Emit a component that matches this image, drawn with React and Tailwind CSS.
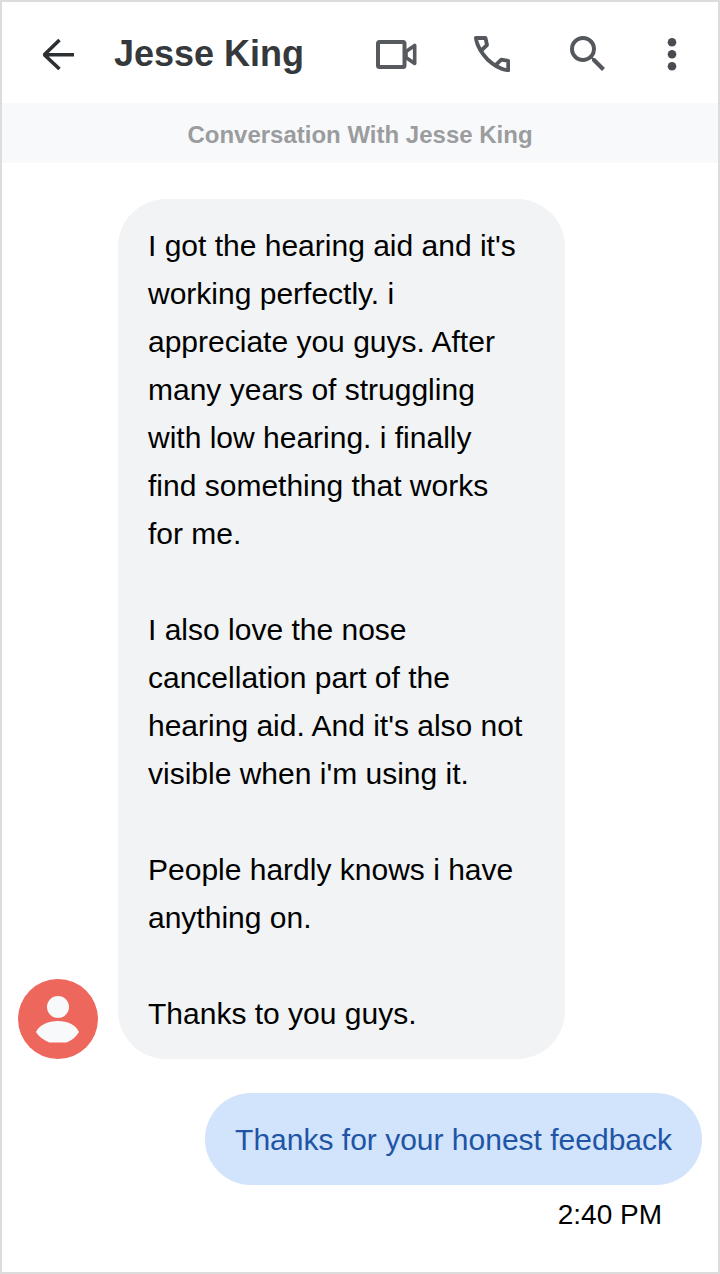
import React, { Component } from "react";
import { MdSearch } from "react-icons/md";

const BackIcon = () => (
  <svg viewBox="0 0 32 32" className="size-8" fill="none" stroke="#2c3033" strokeWidth="3.6" strokeLinejoin="bevel">
    <path d="M32 16.700H2M17.500 2 2.300 16.700l15.200 14.300" />
  </svg>
);

const VideoIcon = () => (
  <svg viewBox="0 0 42 30" className="h-[30px] w-[42px]" fill="none" stroke="#565a5f" strokeLinejoin="round">
    <rect x="3" y="2.900" width="26.500" height="25" rx="1.500" strokeWidth="4" />
    <path d="M31 12.500 39.700 6.500v18L31 18.500z" strokeWidth="3.600" />
  </svg>
);

const CallIcon = () => (
  <svg viewBox="0 0 36 36" className="size-9" fill="none" stroke="#54585d" strokeWidth="3.800" strokeLinejoin="round">
    <path d="M1.900 2H11.500L13 9 6.900 14.800C4.500 11 2.400 7 1.900 2z" />
    <path d="M34.200 34.200V24.900L27.300 23.700 21.300 29.300C25.500 32 29.500 33.800 34.200 34.200z" />
    <path d="M5.500 12.500C9.500 20 15.500 26.500 23.500 30.700" />
  </svg>
);

const MoreIcon = () => (
  <svg viewBox="0 0 10 34" className="h-[34px] w-[10px]" fill="#484c51">
    <circle cx="5" cy="5.300" r="4.300" />
    <circle cx="5" cy="17.300" r="4.300" />
    <circle cx="5" cy="29.300" r="4.300" />
  </svg>
);

const Avatar = () => (
  <svg viewBox="0 0 80 80" className="size-20 shrink-0" role="img" aria-label="Jesse King">
    <circle cx="40" cy="40" r="40" fill="#ee675c" />
    <g fill="#f8f9fa">
      <circle cx="40" cy="28" r="11" />
      <path d="M18 53C22 45.500 30 42 40 42S57 45.500 61 53C58 58 53.500 61.500 48.500 63.500h-17C26.500 61.500 21 58 18 53z" />
    </g>
  </svg>
);

const IconButton = ({ label, className = "w-12", children }) => (
  <button
    type="button"
    aria-label={label}
    className={`flex h-12 items-center justify-center ${className}`}
  >
    {children}
  </button>
);

class Header extends Component {
  render() {
    return (
      <header className="flex items-center justify-between pt-7 pr-[34px] pb-[25px] pl-8">
        <div className="flex items-center gap-8">
          <IconButton label="Back">
            <BackIcon />
          </IconButton>
          <h1 className="text-[36px] leading-12 font-bold text-[#35393c]">{this.props.name}</h1>
        </div>
        <div className="flex gap-12">
          <IconButton label="Video call">
            <VideoIcon />
          </IconButton>
          <IconButton label="Call">
            <CallIcon />
          </IconButton>
          <IconButton label="Search">
            <MdSearch className="size-12 text-[#54585d]" />
          </IconButton>
          <IconButton label="More options" className="w-6">
            <MoreIcon />
          </IconButton>
        </div>
      </header>
    );
  }
}

// one entry per paragraph
const received = [
  "I got the hearing aid and it's working perfectly. i appreciate you guys. After many years of struggling with low hearing. i finally find something that works for me.",
  "I also love the nose cancellation part of the hearing aid. And it's also not visible when i'm using it.",
  "People hardly knows i have anything on.",
  "Thanks to you guys.",
];

class App extends Component {
  render() {
    const name = "Jesse King";
    return (
      <div className="min-h-screen border-2 border-[#dcdcdc] bg-white font-['Liberation_Sans',Arial,sans-serif] text-black">
        <Header name={name} />
        <div className="bg-[#f8f9fb] pt-4 pb-3 text-center text-[24px] leading-8 font-bold text-[#9b9c9e]">
          Conversation With {name}
        </div>
        <main className="px-4 pt-9 text-[30px] leading-12">
          <div className="flex items-end gap-5">
            <Avatar />
            <div className="flex max-w-[447px] flex-col gap-12 rounded-[48px] bg-[#f1f3f4] pt-[23px] pr-10 pb-[21px] pl-[30px]">
              {received.map((text) => (
                <p key={text}>{text}</p>
              ))}
            </div>
          </div>
          <div className="mt-[34px] flex flex-col items-end">
            <p className="rounded-[48px] bg-[#d2e3fc] px-[30px] pt-[23px] pb-[21px] text-[#2055a5]">
              Thanks for your honest feedback
            </p>
            <time className="mt-[6px] mr-10 text-[28px]">2:40 PM</time>
          </div>
        </main>
      </div>
    );
  }
}

export default App;
